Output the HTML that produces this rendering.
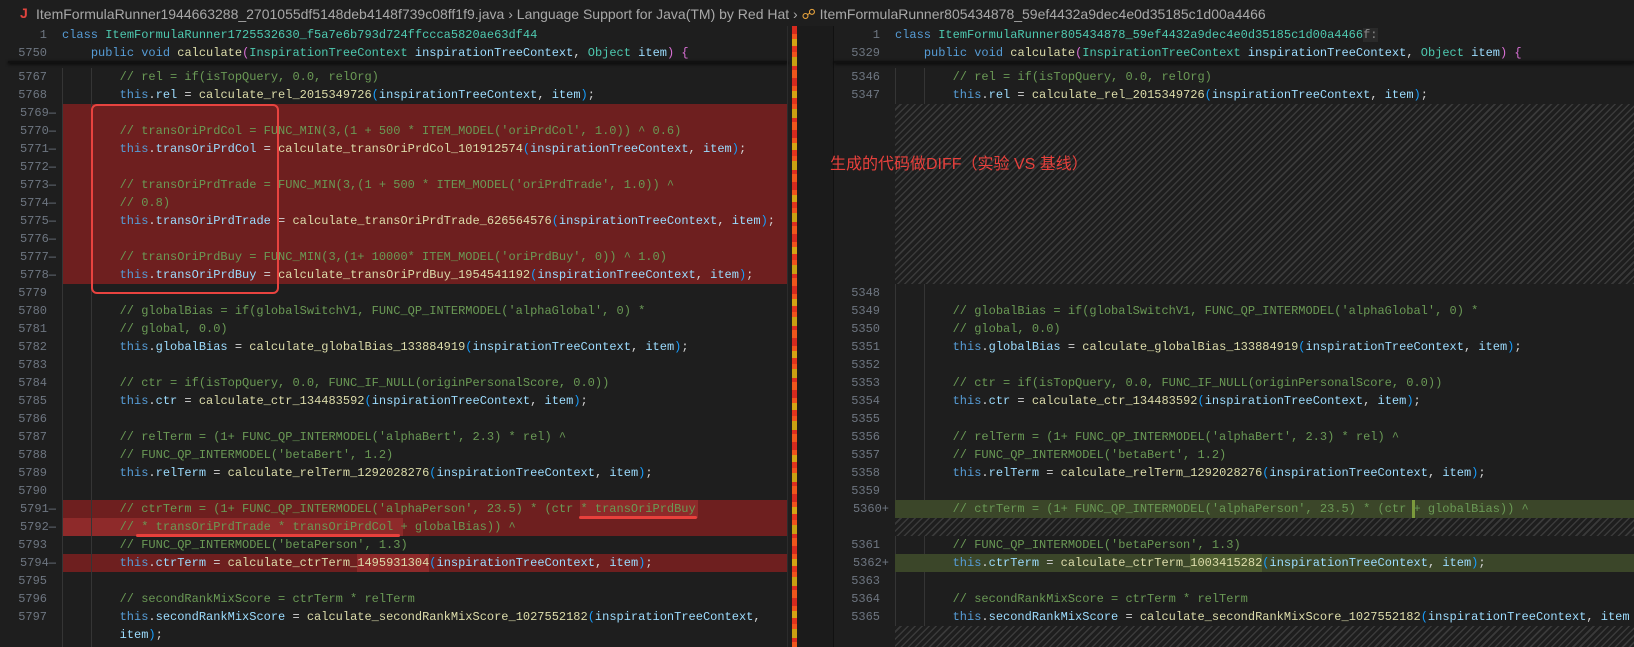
<!DOCTYPE html>
<html><head><meta charset="utf-8">
<style>
*{margin:0;padding:0;box-sizing:border-box}
body{width:1634px;height:647px;overflow:hidden;background:#1e1e1e;position:relative;font-family:"Liberation Mono",monospace;font-size:12px;color:#d4d4d4}
.hdr{position:absolute;left:0;top:0;width:1634px;height:26px;background:#1e1e1e;font-family:"Liberation Sans",sans-serif;font-size:14px;color:#a8a8a8;white-space:nowrap}
.hdr .t{position:absolute;top:6px}
.row{position:absolute;height:18px;line-height:18px;white-space:pre}
.ln{position:absolute;height:18px;line-height:18px;color:#6e7681;text-align:right;white-space:pre}
.c{color:#6a9955}.k{color:#569cd6}.ty{color:#4ec9b0}.f{color:#dcdcaa}.v{color:#9cdcfe}.p1{color:#ffd700}.p2{color:#da70d6}.p3{color:#179fff}
.red{position:absolute;background:#6e1f1f}
.red2{position:absolute;background:#8e2a2a}
.grn{position:absolute;background:#3b4629}
.grn2{position:absolute;background:#4e5d30}
.hatch{position:absolute;background:repeating-linear-gradient(135deg,#1e1e1e 0 3.5px,#3a3a3a 3.5px 5px)}
.guide{position:absolute;width:1px;background:#353535}
.ul{position:absolute;height:3px;background:#e8403c;border-radius:2px}
</style></head><body>

<div class="hdr">
 <span class="t" style="left:20px;color:#e0443e;font-weight:bold;top:5px">J</span>
 <span class="t" style="left:36px">ItemFormulaRunner1944663288_2701055df5148deb4148f739c08ff1f9.java &#8250; Language Support for Java(TM) by Red Hat &#8250; <span style="color:#e8a33d">&#9741;</span> ItemFormulaRunner805434878_59ef4432a9dec4e0d35185c1d00a4466</span>
</div>

<div class="red" style="left:62px;top:104px;width:726px;height:180px"></div>
<div class="red" style="left:62px;top:500px;width:726px;height:36px"></div>
<div class="red2" style="left:580px;top:500px;width:118px;height:18px"></div>
<div class="red2" style="left:62px;top:518px;width:341px;height:18px"></div>
<div class="red" style="left:62px;top:554px;width:726px;height:18px"></div>
<div class="red2" style="left:357px;top:554px;width:72px;height:18px"></div>

<div class="guide" style="left:62px;top:68px;height:579px"></div>
<div class="guide" style="left:91px;top:68px;height:579px"></div>

<div class="ln" style="left:0;top:26px;width:47px">1</div>
<div class="row" style="left:62px;top:26px"><span class="k">class</span> <span class="ty">ItemFormulaRunner1725532630_f5a7e6b793d724ffccca5820ae63df44</span></div>
<div class="ln" style="left:0;top:44px;width:47px">5750</div>
<div class="row" style="left:62px;top:44px">    <span class="k">public</span> <span class="k">void</span> <span class="f">calculate</span><span class="p2">(</span><span class="ty">InspirationTreeContext</span> <span class="v">inspirationTreeContext</span>, <span class="ty">Object</span> <span class="v">item</span><span class="p2">)</span> <span class="p2">{</span></div>
<div style="position:absolute;left:8px;top:61px;width:780px;height:2px;background:#111;box-shadow:0 1px 3px #000"></div>

<div class="ln" style="left:0;top:68px;width:47px">5767</div>
<div class="row" style="left:62px;top:68px">        <span class="c">// rel = if(isTopQuery, 0.0, relOrg)</span></div>
<div class="ln" style="left:0;top:86px;width:47px">5768</div>
<div class="row" style="left:62px;top:86px">        <span class="k">this</span>.<span class="v">rel</span> = <span class="f">calculate_rel_2015349726</span><span class="p3">(</span><span class="v">inspirationTreeContext</span>, <span class="v">item</span><span class="p3">)</span>;</div>
<div class="ln" style="left:0;top:104px;width:56px">5769—</div>
<div class="ln" style="left:0;top:122px;width:56px">5770—</div>
<div class="row" style="left:62px;top:122px">        <span class="c">// transOriPrdCol = FUNC_MIN(3,(1 + 500 * ITEM_MODEL('oriPrdCol', 1.0)) ^ 0.6)</span></div>
<div class="ln" style="left:0;top:140px;width:56px">5771—</div>
<div class="row" style="left:62px;top:140px">        <span class="k">this</span>.<span class="v">transOriPrdCol</span> = <span class="f">calculate_transOriPrdCol_101912574</span><span class="p3">(</span><span class="v">inspirationTreeContext</span>, <span class="v">item</span><span class="p3">)</span>;</div>
<div class="ln" style="left:0;top:158px;width:56px">5772—</div>
<div class="ln" style="left:0;top:176px;width:56px">5773—</div>
<div class="row" style="left:62px;top:176px">        <span class="c">// transOriPrdTrade = FUNC_MIN(3,(1 + 500 * ITEM_MODEL('oriPrdTrade', 1.0)) ^</span></div>
<div class="ln" style="left:0;top:194px;width:56px">5774—</div>
<div class="row" style="left:62px;top:194px">        <span class="c">// 0.8)</span></div>
<div class="ln" style="left:0;top:212px;width:56px">5775—</div>
<div class="row" style="left:62px;top:212px">        <span class="k">this</span>.<span class="v">transOriPrdTrade</span> = <span class="f">calculate_transOriPrdTrade_626564576</span><span class="p3">(</span><span class="v">inspirationTreeContext</span>, <span class="v">item</span><span class="p3">)</span>;</div>
<div class="ln" style="left:0;top:230px;width:56px">5776—</div>
<div class="ln" style="left:0;top:248px;width:56px">5777—</div>
<div class="row" style="left:62px;top:248px">        <span class="c">// transOriPrdBuy = FUNC_MIN(3,(1+ 10000* ITEM_MODEL('oriPrdBuy', 0)) ^ 1.0)</span></div>
<div class="ln" style="left:0;top:266px;width:56px">5778—</div>
<div class="row" style="left:62px;top:266px">        <span class="k">this</span>.<span class="v">transOriPrdBuy</span> = <span class="f">calculate_transOriPrdBuy_1954541192</span><span class="p3">(</span><span class="v">inspirationTreeContext</span>, <span class="v">item</span><span class="p3">)</span>;</div>
<div class="ln" style="left:0;top:284px;width:47px">5779</div>
<div class="ln" style="left:0;top:302px;width:47px">5780</div>
<div class="row" style="left:62px;top:302px">        <span class="c">// globalBias = if(globalSwitchV1, FUNC_QP_INTERMODEL('alphaGlobal', 0) *</span></div>
<div class="ln" style="left:0;top:320px;width:47px">5781</div>
<div class="row" style="left:62px;top:320px">        <span class="c">// global, 0.0)</span></div>
<div class="ln" style="left:0;top:338px;width:47px">5782</div>
<div class="row" style="left:62px;top:338px">        <span class="k">this</span>.<span class="v">globalBias</span> = <span class="f">calculate_globalBias_133884919</span><span class="p3">(</span><span class="v">inspirationTreeContext</span>, <span class="v">item</span><span class="p3">)</span>;</div>
<div class="ln" style="left:0;top:356px;width:47px">5783</div>
<div class="ln" style="left:0;top:374px;width:47px">5784</div>
<div class="row" style="left:62px;top:374px">        <span class="c">// ctr = if(isTopQuery, 0.0, FUNC_IF_NULL(originPersonalScore, 0.0))</span></div>
<div class="ln" style="left:0;top:392px;width:47px">5785</div>
<div class="row" style="left:62px;top:392px">        <span class="k">this</span>.<span class="v">ctr</span> = <span class="f">calculate_ctr_134483592</span><span class="p3">(</span><span class="v">inspirationTreeContext</span>, <span class="v">item</span><span class="p3">)</span>;</div>
<div class="ln" style="left:0;top:410px;width:47px">5786</div>
<div class="ln" style="left:0;top:428px;width:47px">5787</div>
<div class="row" style="left:62px;top:428px">        <span class="c">// relTerm = (1+ FUNC_QP_INTERMODEL('alphaBert', 2.3) * rel) ^</span></div>
<div class="ln" style="left:0;top:446px;width:47px">5788</div>
<div class="row" style="left:62px;top:446px">        <span class="c">// FUNC_QP_INTERMODEL('betaBert', 1.2)</span></div>
<div class="ln" style="left:0;top:464px;width:47px">5789</div>
<div class="row" style="left:62px;top:464px">        <span class="k">this</span>.<span class="v">relTerm</span> = <span class="f">calculate_relTerm_1292028276</span><span class="p3">(</span><span class="v">inspirationTreeContext</span>, <span class="v">item</span><span class="p3">)</span>;</div>
<div class="ln" style="left:0;top:482px;width:47px">5790</div>
<div class="ln" style="left:0;top:500px;width:56px">5791—</div>
<div class="row" style="left:62px;top:500px">        <span class="c">// ctrTerm = (1+ FUNC_QP_INTERMODEL('alphaPerson', 23.5) * (ctr * transOriPrdBuy</span></div>
<div class="ln" style="left:0;top:518px;width:56px">5792—</div>
<div class="row" style="left:62px;top:518px">        <span class="c">// * transOriPrdTrade * transOriPrdCol + globalBias)) ^</span></div>
<div class="ln" style="left:0;top:536px;width:47px">5793</div>
<div class="row" style="left:62px;top:536px">        <span class="c">// FUNC_QP_INTERMODEL('betaPerson', 1.3)</span></div>
<div class="ln" style="left:0;top:554px;width:56px">5794—</div>
<div class="row" style="left:62px;top:554px">        <span class="k">this</span>.<span class="v">ctrTerm</span> = <span class="f">calculate_ctrTerm_1495931304</span><span class="p3">(</span><span class="v">inspirationTreeContext</span>, <span class="v">item</span><span class="p3">)</span>;</div>
<div class="ln" style="left:0;top:572px;width:47px">5795</div>
<div class="ln" style="left:0;top:590px;width:47px">5796</div>
<div class="row" style="left:62px;top:590px">        <span class="c">// secondRankMixScore = ctrTerm * relTerm</span></div>
<div class="ln" style="left:0;top:608px;width:47px">5797</div>
<div class="row" style="left:62px;top:608px">        <span class="k">this</span>.<span class="v">secondRankMixScore</span> = <span class="f">calculate_secondRankMixScore_1027552182</span><span class="p3">(</span><span class="v">inspirationTreeContext</span>,</div>
<div class="row" style="left:62px;top:626px">        <span class="v">item</span><span class="p3">)</span>;</div>

<div style="position:absolute;left:91px;top:104px;width:188px;height:190px;border:2.5px solid #e8433f;border-radius:6px"></div>
<div class="ul" style="left:579px;top:516px;width:118px"></div>
<div class="ul" style="left:136px;top:534px;width:264px"></div>

<div style="position:absolute;left:787px;top:26px;width:1px;height:621px;background:#2c2c2c"></div>
<div style="position:absolute;left:792px;top:26px;width:5px;height:621px;background:repeating-linear-gradient(180deg,#d62a1e 0 8px,#f0521c 8px 13px,#d4a414 13px 20px,#e3341d 20px 26px,#f0521c 26px 31px,#c9a012 31px 40px,#dd2d1f 40px 44px,#ef561c 44px 52px)"></div>
<div style="position:absolute;left:797px;top:26px;width:37px;height:621px;background:#1b1b1b"></div>
<div style="position:absolute;left:833px;top:26px;width:1px;height:621px;background:#111"></div>

<div class="hatch" style="left:895px;top:104px;width:739px;height:180px"></div>
<div class="hatch" style="left:895px;top:518px;width:739px;height:18px"></div>
<div class="hatch" style="left:895px;top:626px;width:739px;height:21px"></div>
<div class="grn" style="left:895px;top:500px;width:739px;height:18px"></div>
<div class="grn" style="left:895px;top:554px;width:739px;height:18px"></div>
<div class="grn2" style="left:1190px;top:554px;width:72px;height:18px"></div>
<div style="position:absolute;left:1412px;top:500px;width:3px;height:18px;background:#7b9a3c"></div>
<div class="guide" style="left:895px;top:68px;height:36px"></div>
<div class="guide" style="left:924px;top:68px;height:36px"></div>
<div class="guide" style="left:895px;top:284px;height:216px"></div>
<div class="guide" style="left:924px;top:284px;height:216px"></div>
<div class="guide" style="left:895px;top:536px;height:18px"></div>
<div class="guide" style="left:924px;top:536px;height:18px"></div>
<div class="guide" style="left:895px;top:572px;height:54px"></div>
<div class="guide" style="left:924px;top:572px;height:54px"></div>

<div class="ln" style="left:820px;top:26px;width:60px">1</div>
<div class="row" style="left:895px;top:26px"><span class="k">class</span> <span class="ty">ItemFormulaRunner805434878_59ef4432a9dec4e0d35185c1d00a4466</span><span style="color:#8a8a8a;background:#2a2a2a">f:</span></div>
<div class="ln" style="left:820px;top:44px;width:60px">5329</div>
<div class="row" style="left:895px;top:44px">    <span class="k">public</span> <span class="k">void</span> <span class="f">calculate</span><span class="p2">(</span><span class="ty">InspirationTreeContext</span> <span class="v">inspirationTreeContext</span>, <span class="ty">Object</span> <span class="v">item</span><span class="p2">)</span> <span class="p2">{</span></div>
<div style="position:absolute;left:834px;top:61px;width:800px;height:2px;background:#111;box-shadow:0 1px 3px #000"></div>

<div class="ln" style="left:820px;top:68px;width:60px">5346</div>
<div class="row" style="left:895px;top:68px">        <span class="c">// rel = if(isTopQuery, 0.0, relOrg)</span></div>
<div class="ln" style="left:820px;top:86px;width:60px">5347</div>
<div class="row" style="left:895px;top:86px">        <span class="k">this</span>.<span class="v">rel</span> = <span class="f">calculate_rel_2015349726</span><span class="p3">(</span><span class="v">inspirationTreeContext</span>, <span class="v">item</span><span class="p3">)</span>;</div>
<div class="ln" style="left:820px;top:284px;width:60px">5348</div>
<div class="ln" style="left:820px;top:302px;width:60px">5349</div>
<div class="row" style="left:895px;top:302px">        <span class="c">// globalBias = if(globalSwitchV1, FUNC_QP_INTERMODEL('alphaGlobal', 0) *</span></div>
<div class="ln" style="left:820px;top:320px;width:60px">5350</div>
<div class="row" style="left:895px;top:320px">        <span class="c">// global, 0.0)</span></div>
<div class="ln" style="left:820px;top:338px;width:60px">5351</div>
<div class="row" style="left:895px;top:338px">        <span class="k">this</span>.<span class="v">globalBias</span> = <span class="f">calculate_globalBias_133884919</span><span class="p3">(</span><span class="v">inspirationTreeContext</span>, <span class="v">item</span><span class="p3">)</span>;</div>
<div class="ln" style="left:820px;top:356px;width:60px">5352</div>
<div class="ln" style="left:820px;top:374px;width:60px">5353</div>
<div class="row" style="left:895px;top:374px">        <span class="c">// ctr = if(isTopQuery, 0.0, FUNC_IF_NULL(originPersonalScore, 0.0))</span></div>
<div class="ln" style="left:820px;top:392px;width:60px">5354</div>
<div class="row" style="left:895px;top:392px">        <span class="k">this</span>.<span class="v">ctr</span> = <span class="f">calculate_ctr_134483592</span><span class="p3">(</span><span class="v">inspirationTreeContext</span>, <span class="v">item</span><span class="p3">)</span>;</div>
<div class="ln" style="left:820px;top:410px;width:60px">5355</div>
<div class="ln" style="left:820px;top:428px;width:60px">5356</div>
<div class="row" style="left:895px;top:428px">        <span class="c">// relTerm = (1+ FUNC_QP_INTERMODEL('alphaBert', 2.3) * rel) ^</span></div>
<div class="ln" style="left:820px;top:446px;width:60px">5357</div>
<div class="row" style="left:895px;top:446px">        <span class="c">// FUNC_QP_INTERMODEL('betaBert', 1.2)</span></div>
<div class="ln" style="left:820px;top:464px;width:60px">5358</div>
<div class="row" style="left:895px;top:464px">        <span class="k">this</span>.<span class="v">relTerm</span> = <span class="f">calculate_relTerm_1292028276</span><span class="p3">(</span><span class="v">inspirationTreeContext</span>, <span class="v">item</span><span class="p3">)</span>;</div>
<div class="ln" style="left:820px;top:482px;width:60px">5359</div>
<div class="ln" style="left:820px;top:500px;width:69px">5360+</div>
<div class="row" style="left:895px;top:500px">        <span class="c">// ctrTerm = (1+ FUNC_QP_INTERMODEL('alphaPerson', 23.5) * (ctr + globalBias)) ^</span></div>
<div class="ln" style="left:820px;top:536px;width:60px">5361</div>
<div class="row" style="left:895px;top:536px">        <span class="c">// FUNC_QP_INTERMODEL('betaPerson', 1.3)</span></div>
<div class="ln" style="left:820px;top:554px;width:69px">5362+</div>
<div class="row" style="left:895px;top:554px">        <span class="k">this</span>.<span class="v">ctrTerm</span> = <span class="f">calculate_ctrTerm_1003415282</span><span class="p3">(</span><span class="v">inspirationTreeContext</span>, <span class="v">item</span><span class="p3">)</span>;</div>
<div class="ln" style="left:820px;top:572px;width:60px">5363</div>
<div class="ln" style="left:820px;top:590px;width:60px">5364</div>
<div class="row" style="left:895px;top:590px">        <span class="c">// secondRankMixScore = ctrTerm * relTerm</span></div>
<div class="ln" style="left:820px;top:608px;width:60px">5365</div>
<div class="row" style="left:895px;top:608px">        <span class="k">this</span>.<span class="v">secondRankMixScore</span> = <span class="f">calculate_secondRankMixScore_1027552182</span><span class="p3">(</span><span class="v">inspirationTreeContext</span>, <span class="v">item</span></div>

<div style="position:absolute;left:830px;top:150px;font-family:'Liberation Sans','Noto Sans CJK SC',sans-serif;font-size:16px;color:#e8403c;white-space:nowrap">生成的代码做DIFF（实验 VS 基线）</div>

</body></html>
